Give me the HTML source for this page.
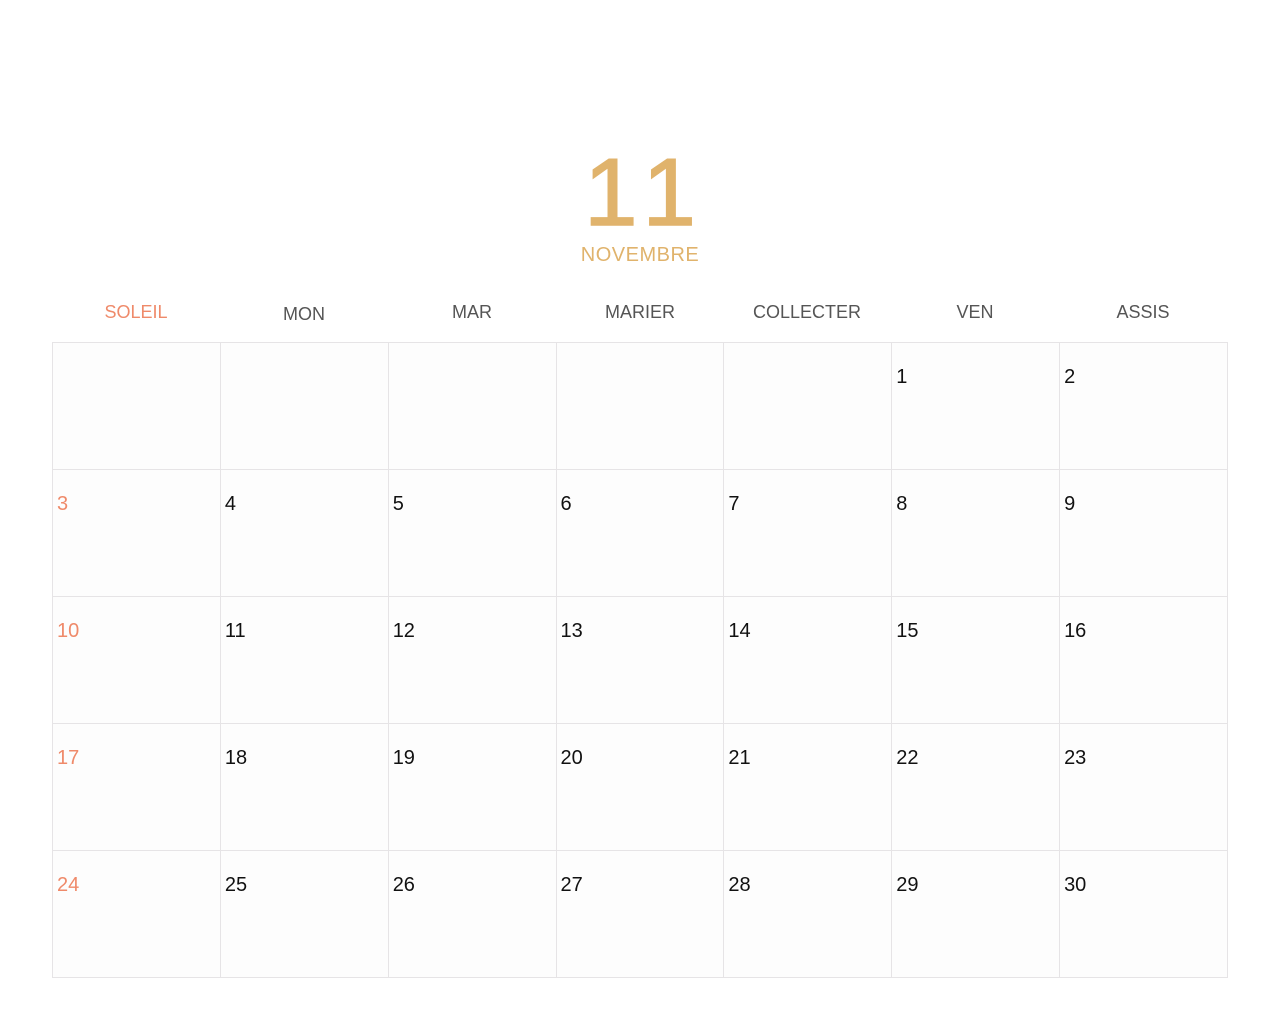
<!DOCTYPE html>
<html><head><meta charset="utf-8"><style>
body{margin:0;width:1280px;height:1031px;background:#fff;font-family:"Liberation Sans",sans-serif;position:relative;overflow:hidden}
.big{position:absolute;left:0;width:1280px;top:138px;text-align:center;font-size:96px;line-height:110px;color:#e0b36c;letter-spacing:12px;text-indent:12px;-webkit-text-stroke:1.5px #e0b36c}
.mon{position:absolute;left:0;width:1280px;top:244px;text-align:center;font-size:20px;color:#e0b36c;letter-spacing:0.5px}
.hd{position:absolute;top:302px;width:168px;text-align:center;font-size:18px;color:#555}
table{position:absolute;left:52px;top:342px;border-collapse:collapse;background:#fdfdfd;table-layout:fixed;width:1176px}
td{border:1px solid #e6e4e6;height:126px;vertical-align:top;padding:0;font-size:20px;color:#111}
td span{display:block;padding:23px 0 0 4px}
td.s{color:#ef8a6a}
</style></head><body>
<div class="big">11</div>
<div class="mon">NOVEMBRE</div>
<div class="hd" style="left:52px;color:#ef8a6a">SOLEIL</div>
<div class="hd" style="left:220px;top:304px">MON</div>
<div class="hd" style="left:388px">MAR</div>
<div class="hd" style="left:556px">MARIER</div>
<div class="hd" style="left:723px">COLLECTER</div>
<div class="hd" style="left:891px">VEN</div>
<div class="hd" style="left:1059px">ASSIS</div>
<table>
<tr><td></td><td></td><td></td><td></td><td></td><td><span>1</span></td><td><span>2</span></td></tr>
<tr><td class="s"><span>3</span></td><td><span>4</span></td><td><span>5</span></td><td><span>6</span></td><td><span>7</span></td><td><span>8</span></td><td><span>9</span></td></tr>
<tr><td class="s"><span>10</span></td><td><span>11</span></td><td><span>12</span></td><td><span>13</span></td><td><span>14</span></td><td><span>15</span></td><td><span>16</span></td></tr>
<tr><td class="s"><span>17</span></td><td><span>18</span></td><td><span>19</span></td><td><span>20</span></td><td><span>21</span></td><td><span>22</span></td><td><span>23</span></td></tr>
<tr><td class="s"><span>24</span></td><td><span>25</span></td><td><span>26</span></td><td><span>27</span></td><td><span>28</span></td><td><span>29</span></td><td><span>30</span></td></tr>
</table>
</body></html>
